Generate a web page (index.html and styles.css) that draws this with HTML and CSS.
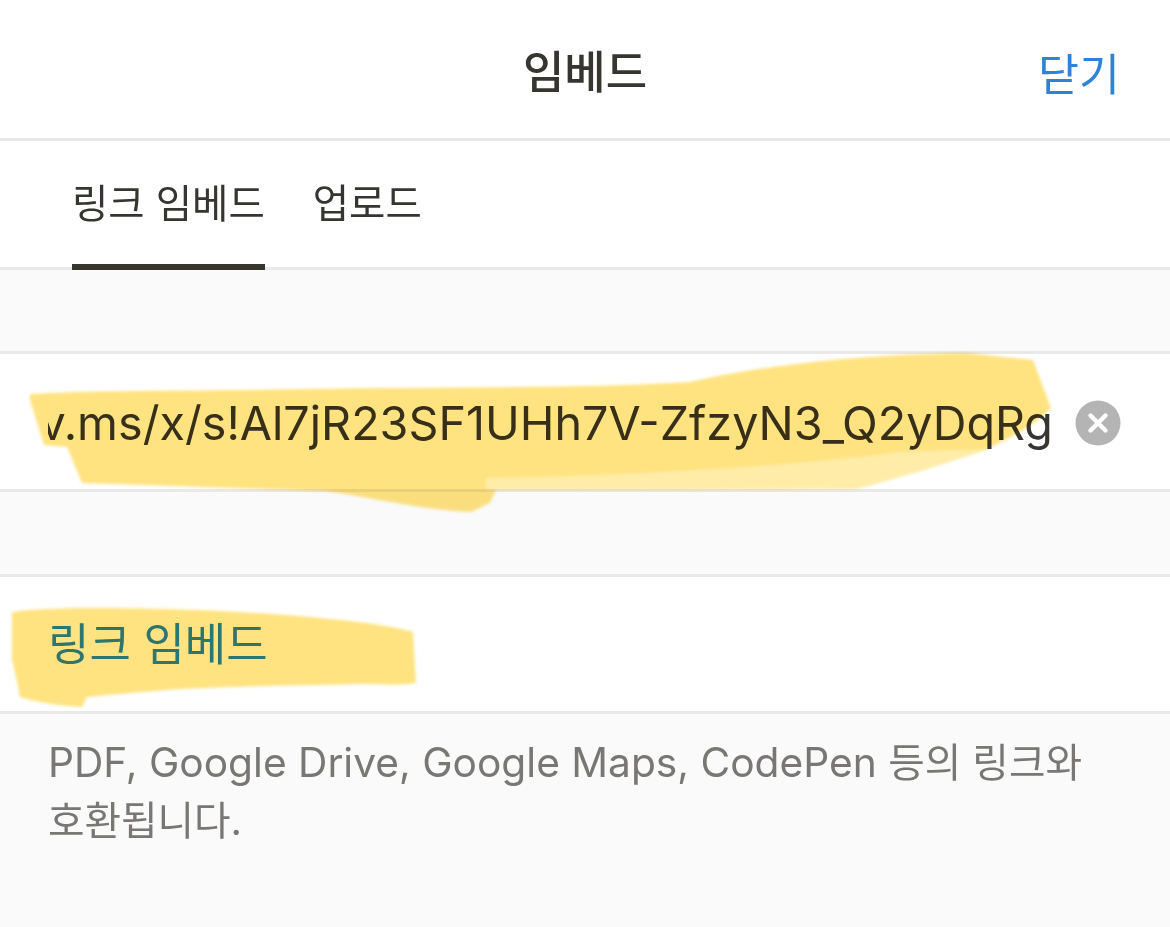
FILE: index.html
```html
<!DOCTYPE html>
<html lang="ko">
<head>
<meta charset="utf-8">
<title>임베드</title>
<link rel="stylesheet" href="styles.css">
</head>
<body>
<div class="sheet">
  <header class="top">
    <h1 class="title">임베드</h1>
    <span class="close">닫기</span>
  </header>
  <nav class="tabs">
    <span class="tab active">링크 임베드</span>
    <span class="tab">업로드</span>
  </nav>
  <div class="gap"></div>
  <div class="field">
    <div class="url"><span>https://1drv.ms/x/s!Al7jR23SF1UHh7V-ZfzyN3_Q2yDqRg</span></div>
    <svg class="clear" viewBox="0 0 46 46" aria-hidden="true">
      <circle cx="23" cy="23" r="22.5" fill="#b4b4b4"/>
      <path d="M15.5 15.5 30.5 30.5M30.5 15.5 15.5 30.5" stroke="#fff" stroke-width="4.4" stroke-linecap="round"/>
    </svg>
  </div>
  <div class="gap gap-low"></div>
  <div class="action">링크 임베드</div>
  <p class="note">PDF, Google Drive, Google Maps, CodePen <span class="cjk">등의 링크와</span><br><span class="cjk">호환됩니다.</span></p>
</div>
<svg class="marker" viewBox="0 0 1170 927" aria-hidden="true">
  <g class="soft">
    <path class="stroke" d="M30 394 C90 390 210 391 300 389 C450 387 600 388 690 382 C760 366 860 354 967 353 L1033 360 L1051 408 C1035 425 1010 438 985 450 C950 462 900 478 855 489 L496 490 L490 503 L471 512 C420 510 370 497 325 491 L82 483 L67 447 L44 445 L30 400 Z"/>
    <path class="stroke-light" d="M486 478 C620 476 800 466 900 452 L985 449 C950 462 900 478 855 489 L486 490 Z"/>
    <path class="stroke" d="M12 612 C50 606 140 608 200 610 C290 614 380 622 413 632 L416 683 C400 686 380 684 360 684 C290 686 220 686 167 690 C140 692 110 695 87 697 L82 707 C60 706 35 702 20 697 L15 672 L12 660 Z"/>
  </g>
</svg>
</body>
</html>
```
FILE: styles.css
```css
* { box-sizing: border-box; }
html, body { margin: 0; height: 100%; }
body {
  background: #fafafa;
  color: #37352f;
  font-family: Inter, "Noto Sans CJK KR", sans-serif;
  overflow: hidden;
  position: relative;
}
.sheet { display: flex; flex-direction: column; }
.top {
  height: 141px;
  background: #fff;
  border-bottom: 3px solid #e9e9e9;
  display: flex;
  align-items: center;
  justify-content: center;
  position: relative;
}
.title {
  margin: 0;
  font-size: 45px;
  font-weight: 500;
  line-height: 1;
  font-family: "Noto Sans CJK KR", sans-serif;
}
.close {
  position: absolute;
  right: 50px;
  top: 44px;
  font-size: 44.5px;
  line-height: 56px;
  color: #2e83d8;
  font-family: "Noto Sans CJK KR", sans-serif;
}
.tabs {
  height: 129px;
  background: #fff;
  border-bottom: 3px solid #e9e9e9;
  display: flex;
  gap: 48px;
  padding-left: 72px;
}
.tab {
  font-family: "Noto Sans CJK KR", sans-serif;
  font-size: 39.5px;
  line-height: 120px;
  height: 129px;
  white-space: nowrap;
}
.tab.active { border-bottom: 6px solid #37352f; }
.gap { height: 84px; border-bottom: 3px solid #e9e9e9; }
.gap-low { height: 85px; }
.field {
  height: 138px;
  background: #fff;
  border-bottom: 3px solid #e9e9e9;
  display: flex;
  align-items: center;
  padding: 3px 49px 0 48px;
  gap: 22px;
}
.url {
  flex: 1;
  min-width: 0;
  overflow: hidden;
  display: flex;
  justify-content: flex-end;
  font-size: 46.7px;
  line-height: 60px;
  white-space: nowrap;
}
.url span { flex: none; }
.clear { width: 46px; height: 46px; flex: none; }
.action {
  height: 137px;
  background: #fff;
  border-bottom: 3px solid #e9e9e9;
  padding: 0 0 0 48px;
  font-family: "Noto Sans CJK KR", sans-serif;
  font-size: 45px;
  line-height: 130px;
  color: #2e83d8;
}
.note {
  margin: 0;
  padding: 20px 48px 0;
  font-family: Inter, "Noto Sans CJK KR", sans-serif;
  font-size: 40.7px;
  line-height: 57px;
  color: #787774;
}
.cjk { font-size: 39.7px; }
.marker {
  position: absolute;
  left: 0;
  top: 0;
  width: 1170px;
  height: 927px;
  mix-blend-mode: multiply;
  pointer-events: none;
}
.soft { filter: blur(1.5px); }
.stroke { fill: #ffe381; }
.stroke-light { fill: #ffeca8; }
```
